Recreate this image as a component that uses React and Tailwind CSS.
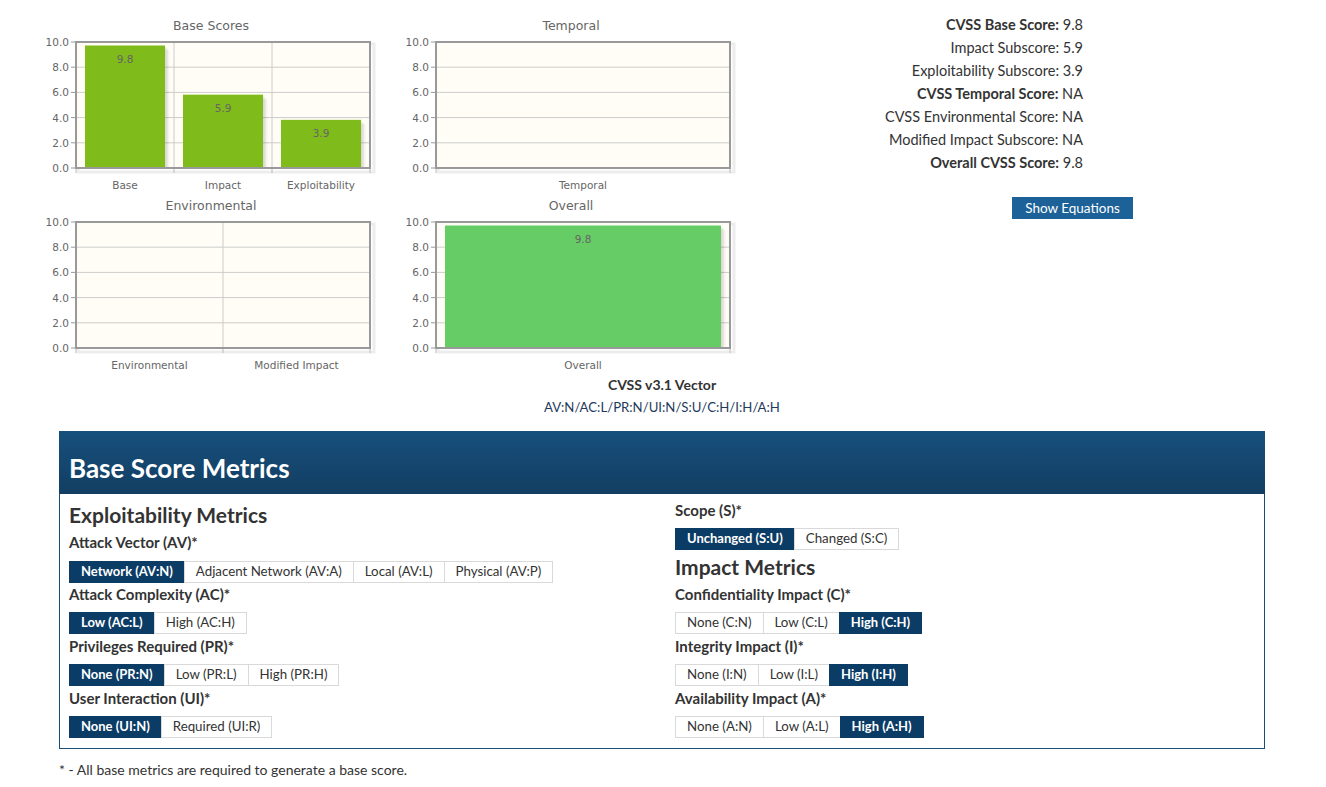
import React from "react";

const PLOT_X = 36;
const PLOT_Y = 30;
const PLOT_W = 294;
const PLOT_H = 126;

function Chart({ title, cats, bars = [], color = "#7fbb1a" }) {
  const n = cats.length;
  const cw = PLOT_W / n;
  const ys = [0, 1, 2, 3, 4, 5].map((i) => PLOT_Y + (PLOT_H * i) / 5);
  const labels = ["10.0", "8.0", "6.0", "4.0", "2.0", "0.0"];
  return (
    <svg width="360" height="180" className="block font-['DejaVu_Sans',sans-serif]">
      <text x="171" y="17.5" textAnchor="middle" fontSize="12.5" fill="#666">
        {title}
      </text>
      <rect x={PLOT_X + 2} y={PLOT_Y + 2} width={PLOT_W + 2} height={PLOT_H + 2} fill="none" stroke="#000" strokeOpacity="0.07" strokeWidth="3" />
      <rect x={PLOT_X} y={PLOT_Y} width={PLOT_W} height={PLOT_H} fill="#fffdf6" />
      {ys.map((y, i) => (
        <g key={i}>
          <line x1={PLOT_X} x2={PLOT_X + PLOT_W} y1={y} y2={y} stroke="#cccccc" strokeWidth="1" />
          <line x1={PLOT_X - 5} x2={PLOT_X} y1={y} y2={y} stroke="#999" strokeWidth="1" />
          <text x={PLOT_X - 7} y={y + 4} textAnchor="end" fontSize="10.5" fill="#666">
            {labels[i]}
          </text>
        </g>
      ))}
      {cats.map((c, i) =>
        i > 0 ? (
          <line key={"v" + i} x1={PLOT_X + cw * i} x2={PLOT_X + cw * i} y1={PLOT_Y} y2={PLOT_Y + PLOT_H} stroke="#cccccc" strokeWidth="1" />
        ) : null
      )}
      {cats.map((c, i) => (
        <line key={"t" + i} x1={PLOT_X + cw * i} x2={PLOT_X + cw * i} y1={PLOT_Y + PLOT_H} y2={PLOT_Y + PLOT_H + 5} stroke="#bbb" strokeWidth="1" />
      ))}
      <line x1={PLOT_X + PLOT_W} x2={PLOT_X + PLOT_W} y1={PLOT_Y + PLOT_H} y2={PLOT_Y + PLOT_H + 5} stroke="#bbb" strokeWidth="1" />
      {bars.map((v, i) => {
        const h = (PLOT_H * v) / 10;
        const x = PLOT_X + cw * i + 9;
        const w = cw - 18;
        const y = PLOT_Y + PLOT_H - h + 1;
        return (
          <g key={"b" + i}>
            <rect x={x + 1.5} y={y + 1.5} width={w} height={h - 1.5} fill="#000" fillOpacity="0.06" />
            <rect x={x + 3} y={y + 3} width={w} height={h - 3} fill="#000" fillOpacity="0.05" />
            <rect x={x + 4.5} y={y + 4.5} width={w} height={h - 4.5} fill="#000" fillOpacity="0.04" />
            <rect x={x} y={y} width={w} height={h - 1} fill={color} />
            <text x={x + w / 2} y={y + 17} textAnchor="middle" fontSize="10.5" fill="#666">
              {v.toFixed(1)}
            </text>
          </g>
        );
      })}
      <rect x={PLOT_X} y={PLOT_Y} width={PLOT_W} height={PLOT_H} fill="none" stroke="#999" strokeWidth="2" />
      {cats.map((c, i) => (
        <text key={"l" + i} x={PLOT_X + cw * i + cw / 2} y="177" textAnchor="middle" fontSize="10.5" fill="#666">
          {c}
        </text>
      ))}
    </svg>
  );
}

function Btn({ label, on }) {
  return (
    <div
      className={
        on
          ? "h-[22px] px-[11px] flex items-center bg-[#0b3c66] border border-[#0b3c66] text-white font-bold text-[13px] -ml-px first:ml-0 whitespace-nowrap"
          : "h-[22px] px-[11px] flex items-center bg-white border border-[#d9d9d9] text-[#333] text-[13.3px] -ml-px first:ml-0 whitespace-nowrap"
      }
    >
      {label}
    </div>
  );
}

function Group({ opts, sel }) {
  return (
    <div className="flex">
      {opts.map((o, i) => (
        <Btn key={o} label={o} on={i === sel} />
      ))}
    </div>
  );
}

function Label({ children, className = "" }) {
  return <div className={"text-[15px] leading-[20px] font-bold text-[#333] " + className}>{children}</div>;
}

export default function App() {
  const scores = [
    ["CVSS Base Score:", "9.8", true],
    ["Impact Subscore:", "5.9", false],
    ["Exploitability Subscore:", "3.9", false],
    ["CVSS Temporal Score:", "NA", true],
    ["CVSS Environmental Score:", "NA", false],
    ["Modified Impact Subscore:", "NA", false],
    ["Overall CVSS Score:", "9.8", true],
  ];
  return (
    <div className="w-[1326px] h-[787px] bg-white overflow-hidden font-['Lato',sans-serif] text-[#333]">
      <div className="flex pt-[12px] pl-[40px]">
        <div className="w-[720px] grid grid-cols-2">
          <Chart title="Base Scores" cats={["Base", "Impact", "Exploitability"]} bars={[9.8, 5.9, 3.9]} />
          <Chart title="Temporal" cats={["Temporal"]} />
          <Chart title="Environmental" cats={["Environmental", "Modified Impact"]} />
          <Chart title="Overall" cats={["Overall"]} bars={[9.8]} color="#66cc66" />
        </div>
        <div className="w-[323px] pt-[1px] flex flex-col items-end">
          {scores.map(([k, v, b]) => (
            <div key={k} className="text-[14.5px] leading-[23px] whitespace-nowrap">
              <span className={b ? "font-bold" : ""}>{k}</span> {v}
            </div>
          ))}
          <button className="self-start ml-[252px] mt-[23px] h-[22px] w-[121px] bg-[#1c6299] text-white text-[13.5px] flex items-center justify-center whitespace-nowrap">
            Show Equations
          </button>
        </div>
      </div>
      <div className="ml-[542px] w-[240px] text-center mt-[2px]">
        <div className="text-[14px] leading-[22px] font-bold">CVSS v3.1 Vector</div>
        <div className="text-[13.2px] leading-[23px] text-[#1f3b5c] whitespace-nowrap">AV:N/AC:L/PR:N/UI:N/S:U/C:H/I:H/A:H</div>
      </div>
      <div className="ml-[59px] mt-[12px] w-[1206px]">
        <div className="h-[63px] bg-gradient-to-b from-[#17507d] to-[#123e62] flex items-center pl-[10px] pt-[11px]">
          <h2 className="text-white font-bold text-[26px] leading-none">Base Score Metrics</h2>
        </div>
        <div className="border border-t-0 border-[#17507d] px-[9px] pt-[6px] pb-[10px] grid grid-cols-2 gap-x-[26px]">
          <div className="pt-[2px]">
            <h3 className="text-[21px] leading-[26px] font-bold">Exploitability Metrics</h3>
            <Label className="mt-[4px]">Attack Vector (AV)*</Label>
            <div className="mt-[9px]">
              <Group opts={["Network (AV:N)", "Adjacent Network (AV:A)", "Local (AV:L)", "Physical (AV:P)"]} sel={0} />
            </div>
            <Label className="mt-[1px]">Attack Complexity (AC)*</Label>
            <div className="mt-[8px]">
              <Group opts={["Low (AC:L)", "High (AC:H)"]} sel={0} />
            </div>
            <Label className="mt-[2px]">Privileges Required (PR)*</Label>
            <div className="mt-[8px]">
              <Group opts={["None (PR:N)", "Low (PR:L)", "High (PR:H)"]} sel={0} />
            </div>
            <Label className="mt-[2px]">User Interaction (UI)*</Label>
            <div className="mt-[8px]">
              <Group opts={["None (UI:N)", "Required (UI:R)"]} sel={0} />
            </div>
          </div>
          <div>
            <Label>Scope (S)*</Label>
            <div className="mt-[8px]">
              <Group opts={["Unchanged (S:U)", "Changed (S:C)"]} sel={0} />
            </div>
            <h3 className="mt-[4px] text-[21px] leading-[26px] font-bold">Impact Metrics</h3>
            <Label className="mt-[4px]">Confidentiality Impact (C)*</Label>
            <div className="mt-[8px]">
              <Group opts={["None (C:N)", "Low (C:L)", "High (C:H)"]} sel={2} />
            </div>
            <Label className="mt-[2px]">Integrity Impact (I)*</Label>
            <div className="mt-[8px]">
              <Group opts={["None (I:N)", "Low (I:L)", "High (I:H)"]} sel={2} />
            </div>
            <Label className="mt-[2px]">Availability Impact (A)*</Label>
            <div className="mt-[8px]">
              <Group opts={["None (A:N)", "Low (A:L)", "High (A:H)"]} sel={2} />
            </div>
          </div>
        </div>
      </div>
      <div className="ml-[59px] mt-[11px] text-[14px] leading-[20px]">* - All base metrics are required to generate a base score.</div>
    </div>
  );
}
